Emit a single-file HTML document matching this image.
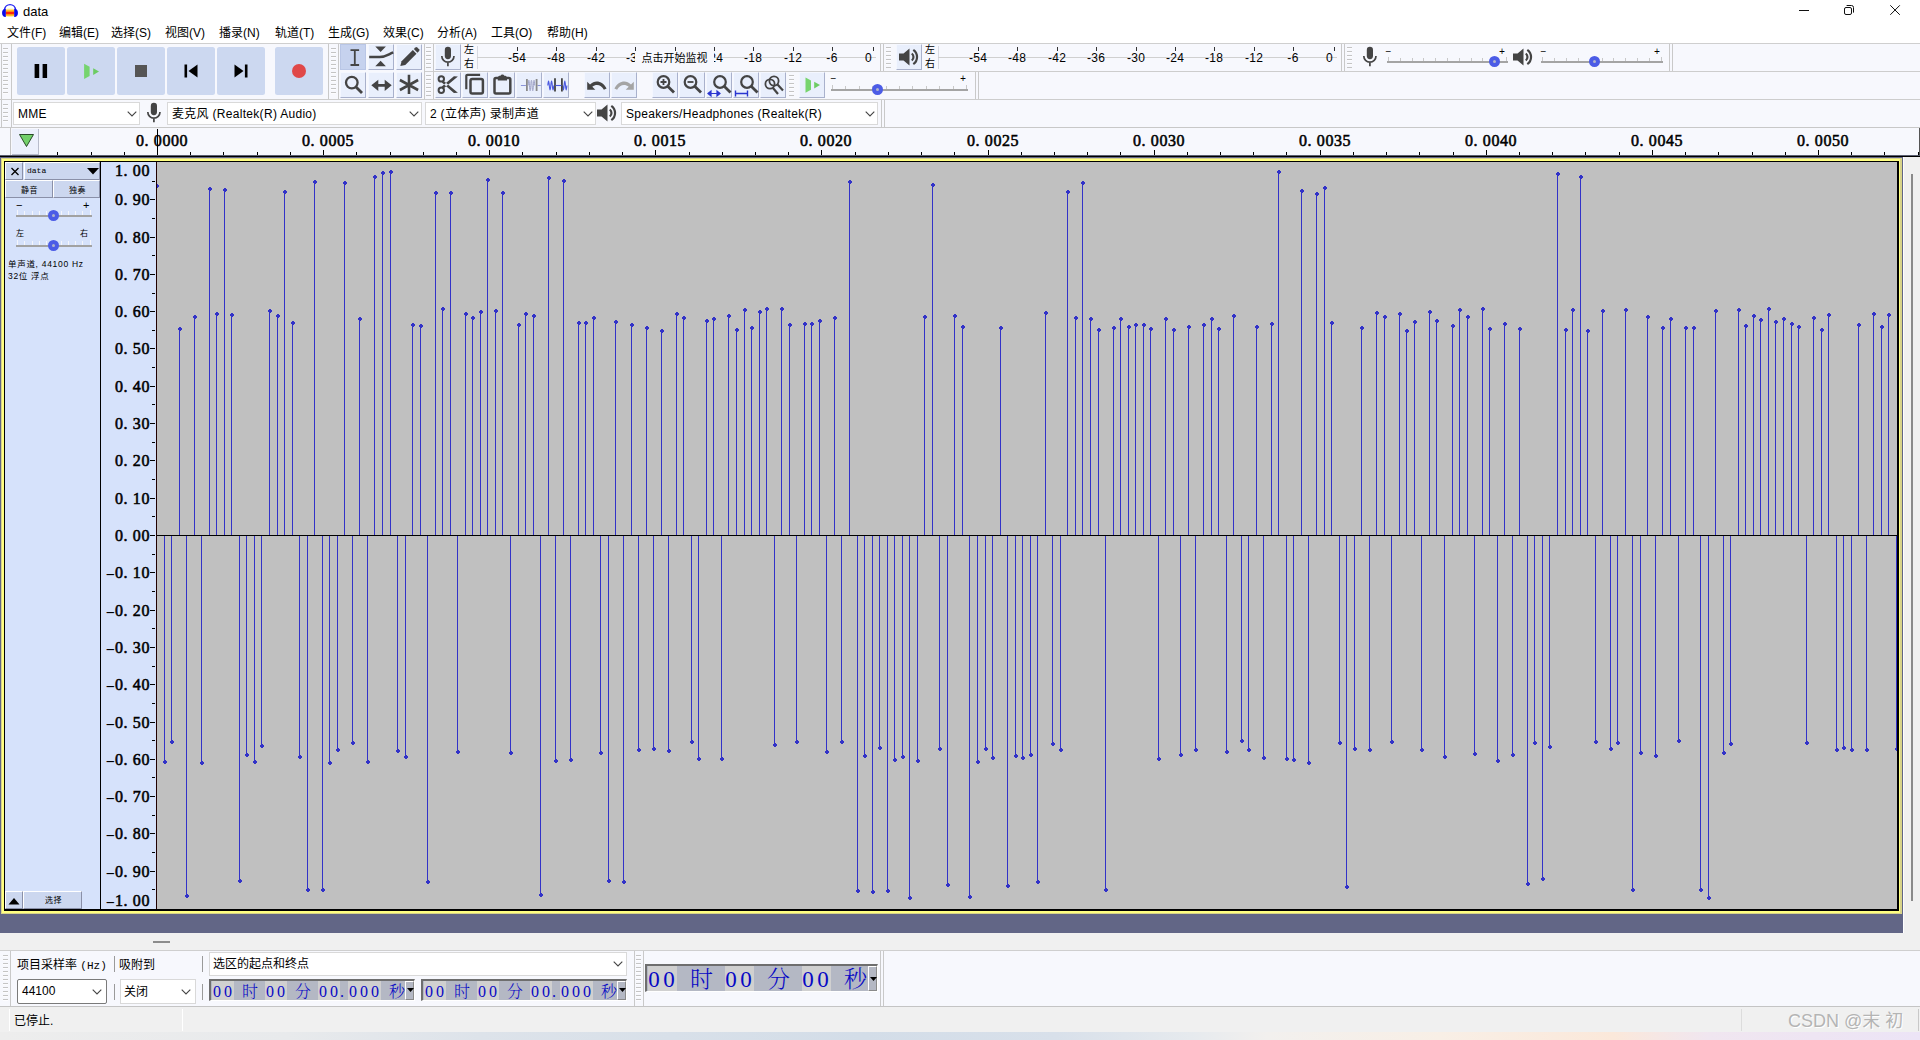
<!DOCTYPE html>
<html lang="zh-CN">
<head>
<meta charset="utf-8">
<title>data</title>
<style>
*{box-sizing:border-box;margin:0;padding:0}
html,body{width:1920px;height:1040px;overflow:hidden;background:#fff}
body{font-family:"Liberation Sans","Noto Sans CJK SC",sans-serif;font-size:12px;color:#000;position:relative}
.abs,#app *{position:absolute}
#app{position:absolute;left:0;top:0;width:1920px;height:1040px;overflow:hidden;background:#f0f0f0}
i{display:block;font-style:normal}
svg{display:block;overflow:visible}
/* title & menu */
#title{left:0;top:0;width:1920px;height:22px;background:#fff}
#title .t{left:23px;top:3.500px;font-size:13px;line-height:16px}
#menu{left:0;top:22px;width:1920px;height:21px;background:#fff}
#menu span{top:3px;font-size:12px;line-height:16px;white-space:nowrap}
/* toolbars */
#tb{left:0;top:43px;width:1920px;height:84px;background:#f7f8fd;border-top:1px solid #cfcfcf}
.hl{height:1px;background:#cdcdcd}
.vl{width:1px;background:#c4c4c4}
.grip{width:5px;background:repeating-linear-gradient(to bottom,#c4c4c4 0,#c4c4c4 1px,#fdfdff 1px,#fdfdff 2px,transparent 2px,transparent 4px)}
.big{width:48px;height:48px;top:47px;background:#ccd8f0;border-radius:2.500px}
.sm{width:26px;height:26px;background:#e9effc;border:1px solid;border-color:#f4f7ff #a9b1cc #a9b1cc #f4f7ff}
.sm.sel{background:#c6d2ee;border-color:#b9c6e6}
.combo{height:23px;background:#fff;border:1px solid #d9d9d9;line-height:22px;font-size:12px;padding-left:4px;white-space:nowrap}
.combo.dv{letter-spacing:0.300px}
.chev{width:8px;height:8px}
/* timeline */
#timeline{left:0;top:127px;width:1920px;height:30px;background:#f7f8fd;border-top:1px solid #c8c8c8}
.tk{width:1px;height:3px;top:152px;background:#000}
.tk.mj{height:5px;top:150px}
.tlab,.vlab{font-family:"Liberation Serif","Noto Serif CJK SC",serif;font-weight:normal;-webkit-text-stroke:0.55px #000;font-size:16px;line-height:18px;letter-spacing:0.6px;white-space:nowrap}
.tlab s,.vlab s{position:static !important;text-decoration:none;letter-spacing:5.200px}
.vlab .mn{position:static !important;display:inline-block;width:8.600px;text-align:center;transform:scale(1.800,0.850) translateY(0.500px);letter-spacing:0;-webkit-text-stroke:0;font-weight:normal}
.tlab{top:132px}
.vlab{right:1770px;text-align:right}
.vt{left:152px;width:3px;height:1px;background:#000}
.vt.mj{left:150px;width:5px}
.wave{left:157px;top:162px;overflow:hidden}
.tiny{font-size:8px;line-height:10px;white-space:nowrap;letter-spacing:0.550px;font-family:"Liberation Sans","Noto Sans CJK SC",sans-serif}
.digits{font-family:"Liberation Serif","Noto Serif CJK SC",serif;font-weight:300;color:#0808c4;white-space:nowrap}

.thumb{width:11px;height:11px;border-radius:50%;border:4.100px solid #4c5ce6;background:#b0b4cc}
.lr{font-size:10px;line-height:12px;font-family:"Liberation Sans","Noto Sans CJK SC",sans-serif}
.pm{font-size:10px;line-height:12px;font-family:"Liberation Mono",monospace}
.ml{top:51px;font-size:12px;line-height:14px;font-family:"Liberation Sans",sans-serif;letter-spacing:0.300px;white-space:nowrap}
.mon{background:#f7f8fd;font-size:11px;line-height:17px;text-align:center;white-space:nowrap;font-family:"Liberation Sans","Noto Sans CJK SC",sans-serif}
.ui{font-size:12px;line-height:16px;white-space:nowrap}
.hz{position:static !important;font-family:"Liberation Mono","Noto Serif CJK SC",monospace;font-size:11px}
.tc{background:#b4b8c4;border:solid;border-width:2px 1px 1px 2px;border-color:#6e6e6e #fff #fff #6e6e6e}
.dg{background:#d0d0d0}
.dg b{font-weight:normal;text-align:center;top:0}
.tcm{background:#b4b8c4;border:1px solid;border-color:#fff #8a8a8a #8a8a8a #fff}
.wm{font-size:18px;line-height:22px;color:#b4b4b4;text-shadow:1px 1px 0 #fff;white-space:nowrap}
</style>
</head>
<body>
<div id="app">

<!-- title bar -->
<div id="title">
  <svg style="left:0;top:0" width="22" height="22" viewBox="0 0 22 22">
    <defs><linearGradient id="ag" x1="0" y1="0" x2="0" y2="1"><stop offset="0" stop-color="#ffe880" stop-opacity="0.200"/><stop offset="0.250" stop-color="#ffc428"/><stop offset="0.420" stop-color="#ff7a10"/><stop offset="0.480" stop-color="#ff2408"/><stop offset="0.620" stop-color="#ff2408"/><stop offset="0.700" stop-color="#ff8a10"/><stop offset="0.850" stop-color="#ffcc30"/><stop offset="1" stop-color="#ffe880" stop-opacity="0.300"/></linearGradient></defs>
    <rect x="5.600" y="8.200" width="8.800" height="8.800" rx="2.500" fill="url(#ag)"/>
    <path d="M4.500 9.500a5.600 5.600 0 0 1 11.100 0" fill="none" stroke="#2222f0" stroke-width="1.400"/>
    <path d="M5.800 8.800v8.200c-5 .5-5-8.700 0-8.200z" fill="#0a0ae8"/>
    <path d="M14.200 8.800v8.200c5 .5 5-8.700 0-8.200z" fill="#0a0ae8"/>
  </svg>
  <span class="t">data</span>
  <svg style="left:1799px;top:10px" width="12" height="2"><rect width="10" height="1" fill="#111"/></svg>
  <svg style="left:1843px;top:4px" width="12" height="12" viewBox="0 0 12 12" fill="none" stroke="#111" stroke-width="1"><rect x="1.500" y="3.500" width="7" height="7" rx="1.500"/><path d="M3.600 1.500H8.500a2 2 0 0 1 2 2V8.600"/></svg>
  <svg style="left:1889px;top:4px" width="12" height="12" viewBox="0 0 12 12" stroke="#111" stroke-width="1"><path d="M1.300 1.300l9.500 9.500M10.800 1.300l-9.500 9.500"/></svg>
</div>

<!-- menu bar -->
<div id="menu">
  <span style="left:7px">文件(F)</span>
  <span style="left:59px">编辑(E)</span>
  <span style="left:111px">选择(S)</span>
  <span style="left:165px">视图(V)</span>
  <span style="left:219px">播录(N)</span>
  <span style="left:275px">轨道(T)</span>
  <span style="left:328px">生成(G)</span>
  <span style="left:383px">效果(C)</span>
  <span style="left:437px">分析(A)</span>
  <span style="left:491px">工具(O)</span>
  <span style="left:547px">帮助(H)</span>
</div>

<!-- toolbars background -->
<div id="tb"></div>
<i class="hl" style="left:0px;top:99px;width:1920px;background:#cdcdcd"></i><i class="hl" style="left:424px;top:71px;width:1496px;background:#cdcdcd"></i><i class="hl" style="left:0px;top:127px;width:1920px;background:#c8c8c8"></i><i class="vl" style="left:1px;top:44px;height:55px;background:#c9c9c9"></i><i class="vl" style="left:11px;top:44px;height:55px;background:#c9c9c9"></i><i class="grip" style="left:3px;top:48px;height:46px"></i><div class="big" style="left:17px"><svg width="48" height="48"><rect x="17.600" y="17" width="4.600" height="14" fill="#000"/><rect x="25.600" y="17" width="4.500" height="14" fill="#000"/></svg></div><div class="big" style="left:67px"><svg width="48" height="48"><path d="M17.100 16.800l5.500 2.900v9.400l-5.500 2.900z" fill="#76d46e"/><path d="M26.200 21.200l5.800 3.300-5.800 3.400z" fill="#6ccc62"/></svg></div><div class="big" style="left:117px"><svg width="48" height="48"><rect x="18" y="18" width="12" height="12" fill="#555"/></svg></div><div class="big" style="left:167px"><svg width="48" height="48"><rect x="17.500" y="17.500" width="2.600" height="13" fill="#000"/><path d="M30.500 17.500v13l-9-6.500z" fill="#000"/></svg></div><div class="big" style="left:217px"><svg width="48" height="48"><rect x="27.900" y="17.500" width="2.600" height="13" fill="#000"/><path d="M17.500 17.500v13l9-6.500z" fill="#000"/></svg></div><div class="big" style="left:275px"><svg width="48" height="48"><circle cx="24" cy="24" r="7" fill="#e04848"/></svg></div><i class="vl" style="left:328px;top:44px;height:55px;background:#c9c9c9"></i><i class="vl" style="left:338px;top:44px;height:55px;background:#c9c9c9"></i><i class="grip" style="left:331px;top:48px;height:46px"></i><div class="sm sel" style="left:340px;top:44px;width:26px"><svg width="26" height="26" viewBox="0 0 26 26" style="left:-1px;top:-1px;"><path d="M10.500 6.200h8.600M10.500 21h8.600M14.800 6.200v14.800" stroke="#444" stroke-width="1.800" fill="none"/></svg></div><div class="sm" style="left:368px;top:44px;width:26px"><svg width="26" height="26" viewBox="0 0 26 26" style="left:-1px;top:-1px;"><path d="M7.300 2.600h10.600l-5.300 5.400zM7.300 22.200h10.600l-5.300-5.400z" fill="#444"/><path d="M1.200 13h10.500c5.500 0 8-2.300 13.500-4.600" stroke="#444" stroke-width="2.600" fill="none"/></svg></div><div class="sm" style="left:396px;top:44px;width:26px"><svg width="26" height="26" viewBox="0 0 26 26" style="left:-1px;top:-1px;"><path d="M4.300 22l1.300-4.800L16.800 6l3.700 3.700L9.300 20.900z" fill="#444"/><path d="M17.800 5l1.600-1.600a1.300 1.300 0 0 1 1.800 0l1.900 1.900a1.300 1.300 0 0 1 0 1.800L21.500 8.700z" fill="#444"/></svg></div><div class="sm" style="left:340px;top:72px;width:26px"><svg width="26" height="26" viewBox="0 0 26 26" style="left:-1px;top:-1px;"><circle cx="11.800" cy="10.600" r="5.800" fill="none" stroke="#444" stroke-width="2.300"/><path d="M16 15l6 6" stroke="#444" stroke-width="2.800"/></svg></div><div class="sm" style="left:368px;top:72px;width:26px"><svg width="26" height="26" viewBox="0 0 26 26" style="left:-1px;top:-1px;"><path d="M3.300 13.300l7-5.600v4.200h6.400V7.700l7 5.600-7 5.600v-4.200h-6.400v4.200z" fill="#444"/></svg></div><div class="sm" style="left:396px;top:72px;width:26px"><svg width="26" height="26" viewBox="0 0 26 26" style="left:-1px;top:-1px;"><path d="M13 2.800v19.200M3.900 8l18.200 10M22.100 8L3.900 18" stroke="#444" stroke-width="2.600" fill="none"/></svg></div><i class="vl" style="left:424px;top:44px;height:55px;background:#c9c9c9"></i><i class="vl" style="left:433px;top:44px;height:55px;background:#c9c9c9"></i><i class="grip" style="left:426px;top:47px;height:21px"></i><i class="grip" style="left:426px;top:75px;height:21px"></i><div class="sm" style="left:435px;top:44px;width:26px"><svg width="26" height="26" viewBox="0 0 26 26" style="left:-1px;top:-1px;"><rect x="9.800" y="2.800" width="6.200" height="12.400" rx="3.100" fill="#444"/><path d="M6.800 12a6.100 6.100 0 0 0 12.200 0M12.900 18.200v4" fill="none" stroke="#444" stroke-width="1.700"/></svg></div><span class="lr" style="left:464px;top:44px">左</span><span class="lr" style="left:464px;top:58px">右</span><i style="left:477px;top:46px;width:1px;height:23px;background:#d8dae2"></i><i style="left:477px;top:57px;width:399px;height:1px;background:#d0d0d0"></i><span class="ml" style="left:502px;width:30px;text-align:center">-54</span><i style="left:517px;top:47px;width:1px;height:4px;background:#333"></i><span class="ml" style="left:541px;width:30px;text-align:center">-48</span><i style="left:556px;top:47px;width:1px;height:4px;background:#333"></i><span class="ml" style="left:581px;width:30px;text-align:center">-42</span><i style="left:596px;top:47px;width:1px;height:4px;background:#333"></i><span class="ml" style="left:620px;width:30px;text-align:center">-36</span><i style="left:635px;top:47px;width:1px;height:4px;background:#333"></i><span class="ml" style="left:660px;width:30px;text-align:center">-30</span><i style="left:675px;top:47px;width:1px;height:4px;background:#333"></i><span class="ml" style="left:699px;width:30px;text-align:center">-24</span><i style="left:714px;top:47px;width:1px;height:4px;background:#333"></i><span class="ml" style="left:738px;width:30px;text-align:center">-18</span><i style="left:753px;top:47px;width:1px;height:4px;background:#333"></i><span class="ml" style="left:778px;width:30px;text-align:center">-12</span><i style="left:793px;top:47px;width:1px;height:4px;background:#333"></i><span class="ml" style="left:817px;width:30px;text-align:center">-6</span><i style="left:832px;top:47px;width:1px;height:4px;background:#333"></i><span class="ml" style="left:856px;width:16px;text-align:right">0</span><i style="left:873px;top:47px;width:1px;height:4px;background:#333"></i><span class="mon" style="left:635px;top:51px;width:79px;height:15px;line-height:15px">点击开始监视</span><i class="vl" style="left:880px;top:44px;height:27px;background:#c9c9c9"></i><i class="vl" style="left:883px;top:44px;height:27px;background:#c9c9c9"></i><i class="grip" style="left:886px;top:47px;height:21px"></i><div class="sm" style="left:896px;top:44px;width:26px"><svg width="26" height="26" viewBox="0 0 26 26" style="left:-1px;top:-1px;"><path d="M3 9.500h4.500l6-5v17l-6-5H3z" fill="#444"/><path d="M15.800 9.500a4.500 4.500 0 0 1 0 7M17.300 5.800a8.800 8.800 0 0 1 0 14.400" fill="none" stroke="#444" stroke-width="2.200"/></svg></div><span class="lr" style="left:925px;top:44px">左</span><span class="lr" style="left:925px;top:58px">右</span><i style="left:938px;top:46px;width:1px;height:23px;background:#d8dae2"></i><i style="left:938px;top:57px;width:399px;height:1px;background:#d0d0d0"></i><span class="ml" style="left:963px;width:30px;text-align:center">-54</span><i style="left:978px;top:47px;width:1px;height:4px;background:#333"></i><span class="ml" style="left:1002px;width:30px;text-align:center">-48</span><i style="left:1017px;top:47px;width:1px;height:4px;background:#333"></i><span class="ml" style="left:1042px;width:30px;text-align:center">-42</span><i style="left:1057px;top:47px;width:1px;height:4px;background:#333"></i><span class="ml" style="left:1081px;width:30px;text-align:center">-36</span><i style="left:1096px;top:47px;width:1px;height:4px;background:#333"></i><span class="ml" style="left:1121px;width:30px;text-align:center">-30</span><i style="left:1136px;top:47px;width:1px;height:4px;background:#333"></i><span class="ml" style="left:1160px;width:30px;text-align:center">-24</span><i style="left:1175px;top:47px;width:1px;height:4px;background:#333"></i><span class="ml" style="left:1199px;width:30px;text-align:center">-18</span><i style="left:1214px;top:47px;width:1px;height:4px;background:#333"></i><span class="ml" style="left:1239px;width:30px;text-align:center">-12</span><i style="left:1254px;top:47px;width:1px;height:4px;background:#333"></i><span class="ml" style="left:1278px;width:30px;text-align:center">-6</span><i style="left:1293px;top:47px;width:1px;height:4px;background:#333"></i><span class="ml" style="left:1317px;width:16px;text-align:right">0</span><i style="left:1334px;top:47px;width:1px;height:4px;background:#333"></i><i class="vl" style="left:1341px;top:44px;height:27px;background:#c9c9c9"></i><i class="vl" style="left:1344px;top:44px;height:27px;background:#c9c9c9"></i><i class="grip" style="left:1347px;top:47px;height:21px"></i><svg style="left:1357px;top:44px" width="26" height="26" viewBox="0 0 26 26"><rect x="9.800" y="2.800" width="6.200" height="12.400" rx="3.100" fill="#444"/><path d="M6.800 12a6.100 6.100 0 0 0 12.200 0M12.900 18.200v4" fill="none" stroke="#444" stroke-width="1.700"/></svg><i style="left:1387px;top:61px;width:121px;height:2px;background:#a4a4a4"></i><i style="left:1388px;top:57px;width:1px;height:4px;background:#c8c8c8"></i><i style="left:1400px;top:58px;width:1px;height:3px;background:#c8c8c8"></i><i style="left:1412px;top:58px;width:1px;height:3px;background:#c8c8c8"></i><i style="left:1423px;top:58px;width:1px;height:3px;background:#c8c8c8"></i><i style="left:1435px;top:58px;width:1px;height:3px;background:#c8c8c8"></i><i style="left:1447px;top:58px;width:1px;height:3px;background:#c8c8c8"></i><i style="left:1459px;top:58px;width:1px;height:3px;background:#c8c8c8"></i><i style="left:1471px;top:58px;width:1px;height:3px;background:#c8c8c8"></i><i style="left:1482px;top:58px;width:1px;height:3px;background:#c8c8c8"></i><i style="left:1494px;top:58px;width:1px;height:3px;background:#c8c8c8"></i><i style="left:1506px;top:57px;width:1px;height:4px;background:#c8c8c8"></i><i class="thumb" style="left:1489px;top:56px"></i><span class="pm" style="left:1385px;top:47px">−</span><span class="pm" style="left:1499px;top:47px">+</span><svg style="left:1510px;top:44px" width="26" height="26" viewBox="0 0 26 26"><path d="M3 9.500h4.500l6-5v17l-6-5H3z" fill="#444"/><path d="M15.800 9.500a4.500 4.500 0 0 1 0 7M17.300 5.800a8.800 8.800 0 0 1 0 14.400" fill="none" stroke="#444" stroke-width="2.200"/></svg><i style="left:1541px;top:61px;width:122px;height:2px;background:#a4a4a4"></i><i style="left:1542px;top:57px;width:1px;height:4px;background:#c8c8c8"></i><i style="left:1554px;top:58px;width:1px;height:3px;background:#c8c8c8"></i><i style="left:1566px;top:58px;width:1px;height:3px;background:#c8c8c8"></i><i style="left:1578px;top:58px;width:1px;height:3px;background:#c8c8c8"></i><i style="left:1590px;top:58px;width:1px;height:3px;background:#c8c8c8"></i><i style="left:1602px;top:58px;width:1px;height:3px;background:#c8c8c8"></i><i style="left:1613px;top:58px;width:1px;height:3px;background:#c8c8c8"></i><i style="left:1625px;top:58px;width:1px;height:3px;background:#c8c8c8"></i><i style="left:1637px;top:58px;width:1px;height:3px;background:#c8c8c8"></i><i style="left:1649px;top:58px;width:1px;height:3px;background:#c8c8c8"></i><i style="left:1661px;top:57px;width:1px;height:4px;background:#c8c8c8"></i><i class="thumb" style="left:1589px;top:56px"></i><span class="pm" style="left:1540px;top:47px">−</span><span class="pm" style="left:1654px;top:47px">+</span><i class="vl" style="left:1669px;top:44px;height:27px;background:#c9c9c9"></i><i class="vl" style="left:1672px;top:44px;height:27px;background:#c9c9c9"></i><div class="sm" style="left:435px;top:72px;width:26px"><svg width="26" height="26" viewBox="0 0 26 26" style="left:-1px;top:-1px;"><circle cx="6.300" cy="6.900" r="2.700" fill="none" stroke="#444" stroke-width="2"/><circle cx="6.300" cy="18.300" r="2.700" fill="none" stroke="#444" stroke-width="2"/><path d="M8.200 8.500l14.700 12.300-4 .2L6.800 10.600zM8.200 16.700L22.900 4.400l-4-.2L6.800 14.600z" fill="#444"/></svg></div><div class="sm" style="left:462px;top:72px;width:26px"><svg width="26" height="26" viewBox="0 0 26 26" style="left:-1px;top:-1px;"><path d="M4.300 17.200V4a1.200 1.200 0 0 1 1.200-1.200h12.600" fill="none" stroke="#444" stroke-width="2.200"/><rect x="8.500" y="7" width="12.400" height="14.600" rx="1.800" fill="none" stroke="#444" stroke-width="2.500"/></svg></div><div class="sm" style="left:489px;top:72px;width:26px"><svg width="26" height="26" viewBox="0 0 26 26" style="left:-1px;top:-1px;"><rect x="5.500" y="6" width="15.800" height="15.600" rx="1.500" fill="none" stroke="#444" stroke-width="2.500"/><path d="M8.800 8.600V5l1.500-1.200h1.200a2 2 0 0 1 3.800 0h1.200L18 5v3.600z" fill="#444"/></svg></div><div class="sm" style="left:516px;top:72px;width:26px"><svg width="26" height="26" viewBox="0 0 26 26" style="left:-1px;top:-1px;"><path d="M4.900 13.500h5M21.500 13.500h3.200" stroke="#8a93d8" stroke-width="1.100"/><path d="M10.900 6.900v12M20.600 6.900v12" stroke="#8a8a8a" stroke-width="1.800"/><path d="M12.200 13.500c.4-7 .9-7 1.300 0s.9 7 1.300 0 .9-7 1.300 0 .9 7 1.300 0 .9-7 1.300 0" stroke="#a0a4c8" stroke-width="1" fill="none"/></svg></div><div class="sm" style="left:543px;top:72px;width:26px"><svg width="26" height="26" viewBox="0 0 26 26" style="left:-1px;top:-1px;"><path d="M4.800 13.500c.5-6 1-6 1.500 0s1 6 1.500 0 1-6 1.500 0 1 6 1.500 0M19.700 13.500c.5 6 .9 6 1.400 0s.9-6 1.400 0 .9 6 1.400 0" stroke="#4a58e0" stroke-width="1.100" fill="none"/><path d="M12 6.300v13.200M18.900 6.300v13.200" stroke="#444" stroke-width="1.800"/><path d="M12.500 13.500h6" stroke="#4a58e0" stroke-width="1.100"/></svg></div><div class="sm" style="left:584px;top:72px;width:26px"><svg width="26" height="26" viewBox="0 0 26 26" style="left:-1px;top:-1px;"><path d="M3.200 9.700v8.100h8.100l-3-3c4-3 9-2 11.600 3l2.700-1.300C19 9.500 11.500 7 6 12.500z" fill="#444"/></svg></div><div class="sm" style="left:611px;top:72px;width:26px"><svg width="26" height="26" viewBox="0 0 26 26" style="left:-1px;top:-1px;"><path d="M22.800 9.700v8.100h-8.100l3-3c-4-3-9-2-11.600 3L3.400 16.500C7 9.500 14.500 7 20 12.500z" fill="#a4a4a4"/></svg></div><div class="sm" style="left:652px;top:72px;width:26px"><svg width="26" height="26" viewBox="0 0 26 26" style="left:-1px;top:-1px;"><g transform="translate(0 0)"><circle cx="11.500" cy="10" r="5.800" fill="none" stroke="#444" stroke-width="2.200"/><path d="M15.700 14.200l6.300 6.300" stroke="#444" stroke-width="2.800"/></g><path d="M8.500 10h6M11.500 7v6" stroke="#444" stroke-width="1.800"/></svg></div><div class="sm" style="left:679px;top:72px;width:26px"><svg width="26" height="26" viewBox="0 0 26 26" style="left:-1px;top:-1px;"><g transform="translate(0 0)"><circle cx="11.500" cy="10" r="5.800" fill="none" stroke="#444" stroke-width="2.200"/><path d="M15.700 14.200l6.300 6.300" stroke="#444" stroke-width="2.800"/></g><path d="M8.500 10h6" stroke="#444" stroke-width="1.800"/></svg></div><div class="sm" style="left:706px;top:72px;width:26px"><svg width="26" height="26" viewBox="0 0 26 26" style="left:-1px;top:-1px;"><g transform="translate(2.5 0)"><circle cx="11.500" cy="10" r="5.800" fill="none" stroke="#444" stroke-width="2.200"/><path d="M15.700 14.200l6.300 6.300" stroke="#444" stroke-width="2.800"/></g><path d="M2 21.500h12M2 21.500l3-2.500v5zM14 21.500l-3-2.500v5z" stroke="#2a35d0" stroke-width="1.200" fill="#2a35d0"/></svg></div><div class="sm" style="left:733px;top:72px;width:26px"><svg width="26" height="26" viewBox="0 0 26 26" style="left:-1px;top:-1px;"><g transform="translate(2.5 0)"><circle cx="11.500" cy="10" r="5.800" fill="none" stroke="#444" stroke-width="2.200"/><path d="M15.700 14.200l6.300 6.300" stroke="#444" stroke-width="2.800"/></g><path d="M2.500 21.500h12M2.500 18.500v6M14.500 18.500v6" stroke="#2a35d0" stroke-width="1.400" fill="none"/></svg></div><div class="sm" style="left:760px;top:72px;width:26px"><svg width="26" height="26" viewBox="0 0 26 26" style="left:-1px;top:-1px;"><circle cx="10" cy="12" r="4.600" fill="none" stroke="#444" stroke-width="1.800"/><circle cx="14" cy="9" r="4.600" fill="none" stroke="#444" stroke-width="1.800"/><path d="M17.500 12.500l5.500 6M13 16l5 6" stroke="#444" stroke-width="2.200"/></svg></div><i class="grip" style="left:789px;top:75px;height:21px"></i><div class="sm" style="left:799px;top:72px;width:26px"><svg width="26" height="26" viewBox="0 0 26 26" style="left:-1px;top:-1px;"><path d="M6.500 5.500l5.500 2.900v9.400l-5.500 2.900z" fill="#76d46e"/><path d="M15.200 9.800l5.800 3.300-5.800 3.400z" fill="#6ccc62"/></svg></div><i style="left:831px;top:89px;width:137px;height:2px;background:#a4a4a4"></i><i style="left:832px;top:85px;width:1px;height:4px;background:#c8c8c8"></i><i style="left:845px;top:86px;width:1px;height:3px;background:#c8c8c8"></i><i style="left:859px;top:86px;width:1px;height:3px;background:#c8c8c8"></i><i style="left:872px;top:86px;width:1px;height:3px;background:#c8c8c8"></i><i style="left:886px;top:86px;width:1px;height:3px;background:#c8c8c8"></i><i style="left:899px;top:86px;width:1px;height:3px;background:#c8c8c8"></i><i style="left:912px;top:86px;width:1px;height:3px;background:#c8c8c8"></i><i style="left:926px;top:86px;width:1px;height:3px;background:#c8c8c8"></i><i style="left:939px;top:86px;width:1px;height:3px;background:#c8c8c8"></i><i style="left:953px;top:86px;width:1px;height:3px;background:#c8c8c8"></i><i style="left:966px;top:85px;width:1px;height:4px;background:#c8c8c8"></i><i class="thumb" style="left:872px;top:84px"></i><span class="pm" style="left:830px;top:74px">−</span><span class="pm" style="left:960px;top:74px">+</span><i class="vl" style="left:975px;top:72px;height:27px;background:#c9c9c9"></i><i class="vl" style="left:978px;top:72px;height:27px;background:#c9c9c9"></i><i class="vl" style="left:1px;top:100px;height:27px;background:#c9c9c9"></i><i class="vl" style="left:11px;top:100px;height:27px;background:#c9c9c9"></i><i class="grip" style="left:3px;top:104px;height:20px"></i><div class="combo dv" style="left:13px;top:102px;width:127px">MME<svg style="left:113px;top:8px" width="10" height="6" viewBox="0 0 10 6"><path d="M0.700 0.700L5 5l4.300-4.300" fill="none" stroke="#444" stroke-width="1.100"/></svg></div><svg style="left:141px;top:100px" width="26" height="26" viewBox="0 0 26 26"><rect x="9.800" y="2.800" width="6.200" height="12.400" rx="3.100" fill="#444"/><path d="M6.800 12a6.100 6.100 0 0 0 12.200 0M12.900 18.200v4" fill="none" stroke="#444" stroke-width="1.700"/></svg><div class="combo dv" style="left:167px;top:102px;width:255px">麦克风 (Realtek(R) Audio)<svg style="left:241px;top:8px" width="10" height="6" viewBox="0 0 10 6"><path d="M0.700 0.700L5 5l4.300-4.300" fill="none" stroke="#444" stroke-width="1.100"/></svg></div><div class="combo dv" style="left:425px;top:102px;width:171px">2 (立体声) 录制声道<svg style="left:157px;top:8px" width="10" height="6" viewBox="0 0 10 6"><path d="M0.700 0.700L5 5l4.300-4.300" fill="none" stroke="#444" stroke-width="1.100"/></svg></div><svg style="left:594px;top:100px" width="26" height="26" viewBox="0 0 26 26"><path d="M3 9.500h4.500l6-5v17l-6-5H3z" fill="#444"/><path d="M15.800 9.500a4.500 4.500 0 0 1 0 7M17.300 5.800a8.800 8.800 0 0 1 0 14.400" fill="none" stroke="#444" stroke-width="2.200"/></svg><div class="combo dv" style="left:621px;top:102px;width:257px">Speakers/Headphones (Realtek(R)<svg style="left:243px;top:8px" width="10" height="6" viewBox="0 0 10 6"><path d="M0.700 0.700L5 5l4.300-4.300" fill="none" stroke="#444" stroke-width="1.100"/></svg></div><i class="vl" style="left:881px;top:100px;height:27px;background:#c9c9c9"></i><i class="vl" style="left:884px;top:100px;height:27px;background:#c9c9c9"></i>

<!-- timeline -->
<div id="timeline"></div>
<i class="tk mj" style="left:157px"></i><span class="tlab" style="left:136px">0<s>.</s>0000</span><i class="tk" style="left:190px"></i><i class="tk" style="left:223px"></i><i class="tk" style="left:257px"></i><i class="tk" style="left:290px"></i><i class="tk mj" style="left:323px"></i><span class="tlab" style="left:302px">0<s>.</s>0005</span><i class="tk" style="left:356px"></i><i class="tk" style="left:390px"></i><i class="tk" style="left:423px"></i><i class="tk" style="left:456px"></i><i class="tk mj" style="left:489px"></i><span class="tlab" style="left:468px">0<s>.</s>0010</span><i class="tk" style="left:522px"></i><i class="tk" style="left:556px"></i><i class="tk" style="left:589px"></i><i class="tk" style="left:622px"></i><i class="tk mj" style="left:655px"></i><span class="tlab" style="left:634px">0<s>.</s>0015</span><i class="tk" style="left:689px"></i><i class="tk" style="left:722px"></i><i class="tk" style="left:755px"></i><i class="tk" style="left:788px"></i><i class="tk mj" style="left:821px"></i><span class="tlab" style="left:800px">0<s>.</s>0020</span><i class="tk" style="left:855px"></i><i class="tk" style="left:888px"></i><i class="tk" style="left:921px"></i><i class="tk" style="left:954px"></i><i class="tk mj" style="left:988px"></i><span class="tlab" style="left:967px">0<s>.</s>0025</span><i class="tk" style="left:1021px"></i><i class="tk" style="left:1054px"></i><i class="tk" style="left:1087px"></i><i class="tk" style="left:1120px"></i><i class="tk mj" style="left:1154px"></i><span class="tlab" style="left:1133px">0<s>.</s>0030</span><i class="tk" style="left:1187px"></i><i class="tk" style="left:1220px"></i><i class="tk" style="left:1253px"></i><i class="tk" style="left:1286px"></i><i class="tk mj" style="left:1320px"></i><span class="tlab" style="left:1299px">0<s>.</s>0035</span><i class="tk" style="left:1353px"></i><i class="tk" style="left:1386px"></i><i class="tk" style="left:1419px"></i><i class="tk" style="left:1453px"></i><i class="tk mj" style="left:1486px"></i><span class="tlab" style="left:1465px">0<s>.</s>0040</span><i class="tk" style="left:1519px"></i><i class="tk" style="left:1552px"></i><i class="tk" style="left:1585px"></i><i class="tk" style="left:1619px"></i><i class="tk mj" style="left:1652px"></i><span class="tlab" style="left:1631px">0<s>.</s>0045</span><i class="tk" style="left:1685px"></i><i class="tk" style="left:1718px"></i><i class="tk" style="left:1752px"></i><i class="tk" style="left:1785px"></i><i class="tk mj" style="left:1818px"></i><span class="tlab" style="left:1797px">0<s>.</s>0050</span><i class="tk" style="left:1851px"></i><i class="tk" style="left:1884px"></i><i class="tk" style="left:1918px"></i><i class="tk" style="left:124px"></i><i class="tk" style="left:91px"></i><i class="tk" style="left:57px"></i>
<i style="left:0;top:155px;width:1920px;height:1px;background:#5a5e70"></i><i style="left:0;top:156px;width:1920px;height:1px;background:#000"></i>
<i style="left:157px;top:129px;width:1px;height:26px;background:#000"></i>
<i style="left:1919px;top:128px;width:1px;height:27px;background:#555"></i>
<i class="vl" style="left:10px;top:128px;height:27px"></i>
<div style="left:12px;top:129px;width:27px;height:26px;background:#ecf0fc;border-right:1px solid #b8bccb;border-bottom:1px solid #b8bccb"><svg width="26" height="26" viewBox="0 0 26 26"><path d="M7.500 5.500h14l-7 12z" fill="#72d06a" stroke="#1a3a1a" stroke-width="0.900"/></svg></div>

<!-- track area -->
<div id="trackarea" style="left:0;top:157px;width:1903px;height:776px;background:#626686"></div>
<div style="left:1px;top:158px;width:1901px;height:756px;background:#d8d48a"></div>
<div style="left:2px;top:159px;width:1898px;height:754px;background:#ffff80"></div>
<div style="left:4px;top:161px;width:1895px;height:750px;background:#000"></div>
<div id="tinfo" style="left:5px;top:162px;width:95px;height:747px;background:#d6e2fb"></div>
<div id="vruler" style="left:101px;top:162px;width:55px;height:747px;background:#d6e2fb"></div>
<div style="left:156px;top:162px;width:1px;height:747px;background:#200000"></div>
<svg class="wave" width="1740" height="747" viewBox="157 162 1740 747" shape-rendering="crispEdges"><rect x="157" y="162" width="1740" height="747" fill="#c0c0c0"/><rect x="157" y="535" width="1740" height="1" fill="#000"/><path fill="#3232c8" d="M156 186h1V535h-1zM164 536h1V762h-1zM171 536h1V742h-1zM179 329h1V535h-1zM186 536h1V896h-1zM194 317h1V535h-1zM201 536h1V763h-1zM209 189h1V535h-1zM216 314h1V535h-1zM224 190h1V535h-1zM231 315h1V535h-1zM239 536h1V881h-1zM246 536h1V755h-1zM254 536h1V762h-1zM261 536h1V746h-1zM269 311h1V535h-1zM277 316h1V535h-1zM284 192h1V535h-1zM292 323h1V535h-1zM299 536h1V757h-1zM307 536h1V890h-1zM314 182h1V535h-1zM322 536h1V890h-1zM329 536h1V763h-1zM337 536h1V750h-1zM344 183h1V535h-1zM352 536h1V743h-1zM359 319h1V535h-1zM367 536h1V762h-1zM374 177h1V535h-1zM382 173h1V535h-1zM390 172h1V535h-1zM397 536h1V751h-1zM405 536h1V757h-1zM412 325h1V535h-1zM420 326h1V535h-1zM427 536h1V882h-1zM435 193h1V535h-1zM442 309h1V535h-1zM450 193h1V535h-1zM457 536h1V752h-1zM465 314h1V535h-1zM472 318h1V535h-1zM480 312h1V535h-1zM487 180h1V535h-1zM495 311h1V535h-1zM502 193h1V535h-1zM510 536h1V753h-1zM518 325h1V535h-1zM525 314h1V535h-1zM533 316h1V535h-1zM540 536h1V895h-1zM548 178h1V535h-1zM555 536h1V761h-1zM563 181h1V535h-1zM570 536h1V760h-1zM578 323h1V535h-1zM585 323h1V535h-1zM593 318h1V535h-1zM600 536h1V753h-1zM608 536h1V881h-1zM615 322h1V535h-1zM623 536h1V882h-1zM631 325h1V535h-1zM638 536h1V750h-1zM646 328h1V535h-1zM653 536h1V749h-1zM661 331h1V535h-1zM668 536h1V751h-1zM676 314h1V535h-1zM683 318h1V535h-1zM691 536h1V742h-1zM698 536h1V759h-1zM706 321h1V535h-1zM713 319h1V535h-1zM721 536h1V759h-1zM728 316h1V535h-1zM736 330h1V535h-1zM744 310h1V535h-1zM751 328h1V535h-1zM759 312h1V535h-1zM766 309h1V535h-1zM774 536h1V745h-1zM781 309h1V535h-1zM789 325h1V535h-1zM796 536h1V742h-1zM804 324h1V535h-1zM811 324h1V535h-1zM819 321h1V535h-1zM826 536h1V752h-1zM834 318h1V535h-1zM841 536h1V742h-1zM849 182h1V535h-1zM857 536h1V891h-1zM864 536h1V756h-1zM872 536h1V892h-1zM879 536h1V748h-1zM887 536h1V891h-1zM894 536h1V760h-1zM902 536h1V757h-1zM909 536h1V898h-1zM917 536h1V761h-1zM924 317h1V535h-1zM932 185h1V535h-1zM939 536h1V749h-1zM947 536h1V885h-1zM954 316h1V535h-1zM962 327h1V535h-1zM969 536h1V897h-1zM977 536h1V762h-1zM985 536h1V749h-1zM992 536h1V758h-1zM1000 328h1V535h-1zM1007 536h1V886h-1zM1015 536h1V756h-1zM1022 536h1V758h-1zM1030 536h1V755h-1zM1037 536h1V882h-1zM1045 313h1V535h-1zM1052 536h1V744h-1zM1060 536h1V750h-1zM1067 192h1V535h-1zM1075 318h1V535h-1zM1082 183h1V535h-1zM1090 319h1V535h-1zM1098 330h1V535h-1zM1105 536h1V890h-1zM1113 328h1V535h-1zM1120 319h1V535h-1zM1128 327h1V535h-1zM1135 325h1V535h-1zM1143 325h1V535h-1zM1150 329h1V535h-1zM1158 536h1V759h-1zM1165 319h1V535h-1zM1173 330h1V535h-1zM1180 536h1V755h-1zM1188 327h1V535h-1zM1195 536h1V750h-1zM1203 325h1V535h-1zM1211 319h1V535h-1zM1218 329h1V535h-1zM1226 536h1V752h-1zM1233 316h1V535h-1zM1241 536h1V741h-1zM1248 536h1V750h-1zM1256 327h1V535h-1zM1263 536h1V758h-1zM1271 324h1V535h-1zM1278 172h1V535h-1zM1286 536h1V759h-1zM1293 536h1V760h-1zM1301 191h1V535h-1zM1308 536h1V763h-1zM1316 194h1V535h-1zM1324 188h1V535h-1zM1331 323h1V535h-1zM1339 536h1V743h-1zM1346 536h1V887h-1zM1354 536h1V749h-1zM1361 328h1V535h-1zM1369 536h1V750h-1zM1376 313h1V535h-1zM1384 317h1V535h-1zM1391 536h1V742h-1zM1399 314h1V535h-1zM1406 331h1V535h-1zM1414 322h1V535h-1zM1421 536h1V750h-1zM1429 312h1V535h-1zM1436 321h1V535h-1zM1444 536h1V757h-1zM1452 326h1V535h-1zM1459 310h1V535h-1zM1467 317h1V535h-1zM1474 536h1V754h-1zM1482 309h1V535h-1zM1489 329h1V535h-1zM1497 536h1V761h-1zM1504 324h1V535h-1zM1512 536h1V755h-1zM1519 329h1V535h-1zM1527 536h1V884h-1zM1534 536h1V743h-1zM1542 536h1V879h-1zM1549 536h1V747h-1zM1557 174h1V535h-1zM1565 330h1V535h-1zM1572 310h1V535h-1zM1580 177h1V535h-1zM1587 331h1V535h-1zM1595 536h1V742h-1zM1602 311h1V535h-1zM1610 536h1V749h-1zM1617 536h1V743h-1zM1625 310h1V535h-1zM1632 536h1V890h-1zM1640 536h1V753h-1zM1647 317h1V535h-1zM1655 536h1V756h-1zM1662 328h1V535h-1zM1670 319h1V535h-1zM1678 536h1V741h-1zM1685 328h1V535h-1zM1693 328h1V535h-1zM1700 536h1V890h-1zM1708 536h1V898h-1zM1715 311h1V535h-1zM1723 536h1V753h-1zM1730 536h1V744h-1zM1738 310h1V535h-1zM1745 326h1V535h-1zM1753 316h1V535h-1zM1760 320h1V535h-1zM1768 309h1V535h-1zM1775 322h1V535h-1zM1783 319h1V535h-1zM1791 324h1V535h-1zM1798 327h1V535h-1zM1806 536h1V743h-1zM1813 318h1V535h-1zM1821 330h1V535h-1zM1828 315h1V535h-1zM1836 536h1V750h-1zM1843 536h1V748h-1zM1851 536h1V750h-1zM1858 325h1V535h-1zM1866 536h1V750h-1zM1873 314h1V535h-1zM1881 327h1V535h-1zM1888 315h1V535h-1zM1896 536h1V749h-1z"/><path fill="#3232c8" d="M156 184h2v1h1v2h-1v1h-2v-1h-1v-2h1zM164 760h2v1h1v2h-1v1h-2v-1h-1v-2h1zM171 740h2v1h1v2h-1v1h-2v-1h-1v-2h1zM179 327h2v1h1v2h-1v1h-2v-1h-1v-2h1zM186 894h2v1h1v2h-1v1h-2v-1h-1v-2h1zM194 315h2v1h1v2h-1v1h-2v-1h-1v-2h1zM201 761h2v1h1v2h-1v1h-2v-1h-1v-2h1zM209 187h2v1h1v2h-1v1h-2v-1h-1v-2h1zM216 312h2v1h1v2h-1v1h-2v-1h-1v-2h1zM224 188h2v1h1v2h-1v1h-2v-1h-1v-2h1zM231 313h2v1h1v2h-1v1h-2v-1h-1v-2h1zM239 879h2v1h1v2h-1v1h-2v-1h-1v-2h1zM246 753h2v1h1v2h-1v1h-2v-1h-1v-2h1zM254 760h2v1h1v2h-1v1h-2v-1h-1v-2h1zM261 744h2v1h1v2h-1v1h-2v-1h-1v-2h1zM269 309h2v1h1v2h-1v1h-2v-1h-1v-2h1zM277 314h2v1h1v2h-1v1h-2v-1h-1v-2h1zM284 190h2v1h1v2h-1v1h-2v-1h-1v-2h1zM292 321h2v1h1v2h-1v1h-2v-1h-1v-2h1zM299 755h2v1h1v2h-1v1h-2v-1h-1v-2h1zM307 888h2v1h1v2h-1v1h-2v-1h-1v-2h1zM314 180h2v1h1v2h-1v1h-2v-1h-1v-2h1zM322 888h2v1h1v2h-1v1h-2v-1h-1v-2h1zM329 761h2v1h1v2h-1v1h-2v-1h-1v-2h1zM337 748h2v1h1v2h-1v1h-2v-1h-1v-2h1zM344 181h2v1h1v2h-1v1h-2v-1h-1v-2h1zM352 741h2v1h1v2h-1v1h-2v-1h-1v-2h1zM359 317h2v1h1v2h-1v1h-2v-1h-1v-2h1zM367 760h2v1h1v2h-1v1h-2v-1h-1v-2h1zM374 175h2v1h1v2h-1v1h-2v-1h-1v-2h1zM382 171h2v1h1v2h-1v1h-2v-1h-1v-2h1zM390 170h2v1h1v2h-1v1h-2v-1h-1v-2h1zM397 749h2v1h1v2h-1v1h-2v-1h-1v-2h1zM405 755h2v1h1v2h-1v1h-2v-1h-1v-2h1zM412 323h2v1h1v2h-1v1h-2v-1h-1v-2h1zM420 324h2v1h1v2h-1v1h-2v-1h-1v-2h1zM427 880h2v1h1v2h-1v1h-2v-1h-1v-2h1zM435 191h2v1h1v2h-1v1h-2v-1h-1v-2h1zM442 307h2v1h1v2h-1v1h-2v-1h-1v-2h1zM450 191h2v1h1v2h-1v1h-2v-1h-1v-2h1zM457 750h2v1h1v2h-1v1h-2v-1h-1v-2h1zM465 312h2v1h1v2h-1v1h-2v-1h-1v-2h1zM472 316h2v1h1v2h-1v1h-2v-1h-1v-2h1zM480 310h2v1h1v2h-1v1h-2v-1h-1v-2h1zM487 178h2v1h1v2h-1v1h-2v-1h-1v-2h1zM495 309h2v1h1v2h-1v1h-2v-1h-1v-2h1zM502 191h2v1h1v2h-1v1h-2v-1h-1v-2h1zM510 751h2v1h1v2h-1v1h-2v-1h-1v-2h1zM518 323h2v1h1v2h-1v1h-2v-1h-1v-2h1zM525 312h2v1h1v2h-1v1h-2v-1h-1v-2h1zM533 314h2v1h1v2h-1v1h-2v-1h-1v-2h1zM540 893h2v1h1v2h-1v1h-2v-1h-1v-2h1zM548 176h2v1h1v2h-1v1h-2v-1h-1v-2h1zM555 759h2v1h1v2h-1v1h-2v-1h-1v-2h1zM563 179h2v1h1v2h-1v1h-2v-1h-1v-2h1zM570 758h2v1h1v2h-1v1h-2v-1h-1v-2h1zM578 321h2v1h1v2h-1v1h-2v-1h-1v-2h1zM585 321h2v1h1v2h-1v1h-2v-1h-1v-2h1zM593 316h2v1h1v2h-1v1h-2v-1h-1v-2h1zM600 751h2v1h1v2h-1v1h-2v-1h-1v-2h1zM608 879h2v1h1v2h-1v1h-2v-1h-1v-2h1zM615 320h2v1h1v2h-1v1h-2v-1h-1v-2h1zM623 880h2v1h1v2h-1v1h-2v-1h-1v-2h1zM631 323h2v1h1v2h-1v1h-2v-1h-1v-2h1zM638 748h2v1h1v2h-1v1h-2v-1h-1v-2h1zM646 326h2v1h1v2h-1v1h-2v-1h-1v-2h1zM653 747h2v1h1v2h-1v1h-2v-1h-1v-2h1zM661 329h2v1h1v2h-1v1h-2v-1h-1v-2h1zM668 749h2v1h1v2h-1v1h-2v-1h-1v-2h1zM676 312h2v1h1v2h-1v1h-2v-1h-1v-2h1zM683 316h2v1h1v2h-1v1h-2v-1h-1v-2h1zM691 740h2v1h1v2h-1v1h-2v-1h-1v-2h1zM698 757h2v1h1v2h-1v1h-2v-1h-1v-2h1zM706 319h2v1h1v2h-1v1h-2v-1h-1v-2h1zM713 317h2v1h1v2h-1v1h-2v-1h-1v-2h1zM721 757h2v1h1v2h-1v1h-2v-1h-1v-2h1zM728 314h2v1h1v2h-1v1h-2v-1h-1v-2h1zM736 328h2v1h1v2h-1v1h-2v-1h-1v-2h1zM744 308h2v1h1v2h-1v1h-2v-1h-1v-2h1zM751 326h2v1h1v2h-1v1h-2v-1h-1v-2h1zM759 310h2v1h1v2h-1v1h-2v-1h-1v-2h1zM766 307h2v1h1v2h-1v1h-2v-1h-1v-2h1zM774 743h2v1h1v2h-1v1h-2v-1h-1v-2h1zM781 307h2v1h1v2h-1v1h-2v-1h-1v-2h1zM789 323h2v1h1v2h-1v1h-2v-1h-1v-2h1zM796 740h2v1h1v2h-1v1h-2v-1h-1v-2h1zM804 322h2v1h1v2h-1v1h-2v-1h-1v-2h1zM811 322h2v1h1v2h-1v1h-2v-1h-1v-2h1zM819 319h2v1h1v2h-1v1h-2v-1h-1v-2h1zM826 750h2v1h1v2h-1v1h-2v-1h-1v-2h1zM834 316h2v1h1v2h-1v1h-2v-1h-1v-2h1zM841 740h2v1h1v2h-1v1h-2v-1h-1v-2h1zM849 180h2v1h1v2h-1v1h-2v-1h-1v-2h1zM857 889h2v1h1v2h-1v1h-2v-1h-1v-2h1zM864 754h2v1h1v2h-1v1h-2v-1h-1v-2h1zM872 890h2v1h1v2h-1v1h-2v-1h-1v-2h1zM879 746h2v1h1v2h-1v1h-2v-1h-1v-2h1zM887 889h2v1h1v2h-1v1h-2v-1h-1v-2h1zM894 758h2v1h1v2h-1v1h-2v-1h-1v-2h1zM902 755h2v1h1v2h-1v1h-2v-1h-1v-2h1zM909 896h2v1h1v2h-1v1h-2v-1h-1v-2h1zM917 759h2v1h1v2h-1v1h-2v-1h-1v-2h1zM924 315h2v1h1v2h-1v1h-2v-1h-1v-2h1zM932 183h2v1h1v2h-1v1h-2v-1h-1v-2h1zM939 747h2v1h1v2h-1v1h-2v-1h-1v-2h1zM947 883h2v1h1v2h-1v1h-2v-1h-1v-2h1zM954 314h2v1h1v2h-1v1h-2v-1h-1v-2h1zM962 325h2v1h1v2h-1v1h-2v-1h-1v-2h1zM969 895h2v1h1v2h-1v1h-2v-1h-1v-2h1zM977 760h2v1h1v2h-1v1h-2v-1h-1v-2h1zM985 747h2v1h1v2h-1v1h-2v-1h-1v-2h1zM992 756h2v1h1v2h-1v1h-2v-1h-1v-2h1zM1000 326h2v1h1v2h-1v1h-2v-1h-1v-2h1zM1007 884h2v1h1v2h-1v1h-2v-1h-1v-2h1zM1015 754h2v1h1v2h-1v1h-2v-1h-1v-2h1zM1022 756h2v1h1v2h-1v1h-2v-1h-1v-2h1zM1030 753h2v1h1v2h-1v1h-2v-1h-1v-2h1zM1037 880h2v1h1v2h-1v1h-2v-1h-1v-2h1zM1045 311h2v1h1v2h-1v1h-2v-1h-1v-2h1zM1052 742h2v1h1v2h-1v1h-2v-1h-1v-2h1zM1060 748h2v1h1v2h-1v1h-2v-1h-1v-2h1zM1067 190h2v1h1v2h-1v1h-2v-1h-1v-2h1zM1075 316h2v1h1v2h-1v1h-2v-1h-1v-2h1zM1082 181h2v1h1v2h-1v1h-2v-1h-1v-2h1zM1090 317h2v1h1v2h-1v1h-2v-1h-1v-2h1zM1098 328h2v1h1v2h-1v1h-2v-1h-1v-2h1zM1105 888h2v1h1v2h-1v1h-2v-1h-1v-2h1zM1113 326h2v1h1v2h-1v1h-2v-1h-1v-2h1zM1120 317h2v1h1v2h-1v1h-2v-1h-1v-2h1zM1128 325h2v1h1v2h-1v1h-2v-1h-1v-2h1zM1135 323h2v1h1v2h-1v1h-2v-1h-1v-2h1zM1143 323h2v1h1v2h-1v1h-2v-1h-1v-2h1zM1150 327h2v1h1v2h-1v1h-2v-1h-1v-2h1zM1158 757h2v1h1v2h-1v1h-2v-1h-1v-2h1zM1165 317h2v1h1v2h-1v1h-2v-1h-1v-2h1zM1173 328h2v1h1v2h-1v1h-2v-1h-1v-2h1zM1180 753h2v1h1v2h-1v1h-2v-1h-1v-2h1zM1188 325h2v1h1v2h-1v1h-2v-1h-1v-2h1zM1195 748h2v1h1v2h-1v1h-2v-1h-1v-2h1zM1203 323h2v1h1v2h-1v1h-2v-1h-1v-2h1zM1211 317h2v1h1v2h-1v1h-2v-1h-1v-2h1zM1218 327h2v1h1v2h-1v1h-2v-1h-1v-2h1zM1226 750h2v1h1v2h-1v1h-2v-1h-1v-2h1zM1233 314h2v1h1v2h-1v1h-2v-1h-1v-2h1zM1241 739h2v1h1v2h-1v1h-2v-1h-1v-2h1zM1248 748h2v1h1v2h-1v1h-2v-1h-1v-2h1zM1256 325h2v1h1v2h-1v1h-2v-1h-1v-2h1zM1263 756h2v1h1v2h-1v1h-2v-1h-1v-2h1zM1271 322h2v1h1v2h-1v1h-2v-1h-1v-2h1zM1278 170h2v1h1v2h-1v1h-2v-1h-1v-2h1zM1286 757h2v1h1v2h-1v1h-2v-1h-1v-2h1zM1293 758h2v1h1v2h-1v1h-2v-1h-1v-2h1zM1301 189h2v1h1v2h-1v1h-2v-1h-1v-2h1zM1308 761h2v1h1v2h-1v1h-2v-1h-1v-2h1zM1316 192h2v1h1v2h-1v1h-2v-1h-1v-2h1zM1324 186h2v1h1v2h-1v1h-2v-1h-1v-2h1zM1331 321h2v1h1v2h-1v1h-2v-1h-1v-2h1zM1339 741h2v1h1v2h-1v1h-2v-1h-1v-2h1zM1346 885h2v1h1v2h-1v1h-2v-1h-1v-2h1zM1354 747h2v1h1v2h-1v1h-2v-1h-1v-2h1zM1361 326h2v1h1v2h-1v1h-2v-1h-1v-2h1zM1369 748h2v1h1v2h-1v1h-2v-1h-1v-2h1zM1376 311h2v1h1v2h-1v1h-2v-1h-1v-2h1zM1384 315h2v1h1v2h-1v1h-2v-1h-1v-2h1zM1391 740h2v1h1v2h-1v1h-2v-1h-1v-2h1zM1399 312h2v1h1v2h-1v1h-2v-1h-1v-2h1zM1406 329h2v1h1v2h-1v1h-2v-1h-1v-2h1zM1414 320h2v1h1v2h-1v1h-2v-1h-1v-2h1zM1421 748h2v1h1v2h-1v1h-2v-1h-1v-2h1zM1429 310h2v1h1v2h-1v1h-2v-1h-1v-2h1zM1436 319h2v1h1v2h-1v1h-2v-1h-1v-2h1zM1444 755h2v1h1v2h-1v1h-2v-1h-1v-2h1zM1452 324h2v1h1v2h-1v1h-2v-1h-1v-2h1zM1459 308h2v1h1v2h-1v1h-2v-1h-1v-2h1zM1467 315h2v1h1v2h-1v1h-2v-1h-1v-2h1zM1474 752h2v1h1v2h-1v1h-2v-1h-1v-2h1zM1482 307h2v1h1v2h-1v1h-2v-1h-1v-2h1zM1489 327h2v1h1v2h-1v1h-2v-1h-1v-2h1zM1497 759h2v1h1v2h-1v1h-2v-1h-1v-2h1zM1504 322h2v1h1v2h-1v1h-2v-1h-1v-2h1zM1512 753h2v1h1v2h-1v1h-2v-1h-1v-2h1zM1519 327h2v1h1v2h-1v1h-2v-1h-1v-2h1zM1527 882h2v1h1v2h-1v1h-2v-1h-1v-2h1zM1534 741h2v1h1v2h-1v1h-2v-1h-1v-2h1zM1542 877h2v1h1v2h-1v1h-2v-1h-1v-2h1zM1549 745h2v1h1v2h-1v1h-2v-1h-1v-2h1zM1557 172h2v1h1v2h-1v1h-2v-1h-1v-2h1zM1565 328h2v1h1v2h-1v1h-2v-1h-1v-2h1zM1572 308h2v1h1v2h-1v1h-2v-1h-1v-2h1zM1580 175h2v1h1v2h-1v1h-2v-1h-1v-2h1zM1587 329h2v1h1v2h-1v1h-2v-1h-1v-2h1zM1595 740h2v1h1v2h-1v1h-2v-1h-1v-2h1zM1602 309h2v1h1v2h-1v1h-2v-1h-1v-2h1zM1610 747h2v1h1v2h-1v1h-2v-1h-1v-2h1zM1617 741h2v1h1v2h-1v1h-2v-1h-1v-2h1zM1625 308h2v1h1v2h-1v1h-2v-1h-1v-2h1zM1632 888h2v1h1v2h-1v1h-2v-1h-1v-2h1zM1640 751h2v1h1v2h-1v1h-2v-1h-1v-2h1zM1647 315h2v1h1v2h-1v1h-2v-1h-1v-2h1zM1655 754h2v1h1v2h-1v1h-2v-1h-1v-2h1zM1662 326h2v1h1v2h-1v1h-2v-1h-1v-2h1zM1670 317h2v1h1v2h-1v1h-2v-1h-1v-2h1zM1678 739h2v1h1v2h-1v1h-2v-1h-1v-2h1zM1685 326h2v1h1v2h-1v1h-2v-1h-1v-2h1zM1693 326h2v1h1v2h-1v1h-2v-1h-1v-2h1zM1700 888h2v1h1v2h-1v1h-2v-1h-1v-2h1zM1708 896h2v1h1v2h-1v1h-2v-1h-1v-2h1zM1715 309h2v1h1v2h-1v1h-2v-1h-1v-2h1zM1723 751h2v1h1v2h-1v1h-2v-1h-1v-2h1zM1730 742h2v1h1v2h-1v1h-2v-1h-1v-2h1zM1738 308h2v1h1v2h-1v1h-2v-1h-1v-2h1zM1745 324h2v1h1v2h-1v1h-2v-1h-1v-2h1zM1753 314h2v1h1v2h-1v1h-2v-1h-1v-2h1zM1760 318h2v1h1v2h-1v1h-2v-1h-1v-2h1zM1768 307h2v1h1v2h-1v1h-2v-1h-1v-2h1zM1775 320h2v1h1v2h-1v1h-2v-1h-1v-2h1zM1783 317h2v1h1v2h-1v1h-2v-1h-1v-2h1zM1791 322h2v1h1v2h-1v1h-2v-1h-1v-2h1zM1798 325h2v1h1v2h-1v1h-2v-1h-1v-2h1zM1806 741h2v1h1v2h-1v1h-2v-1h-1v-2h1zM1813 316h2v1h1v2h-1v1h-2v-1h-1v-2h1zM1821 328h2v1h1v2h-1v1h-2v-1h-1v-2h1zM1828 313h2v1h1v2h-1v1h-2v-1h-1v-2h1zM1836 748h2v1h1v2h-1v1h-2v-1h-1v-2h1zM1843 746h2v1h1v2h-1v1h-2v-1h-1v-2h1zM1851 748h2v1h1v2h-1v1h-2v-1h-1v-2h1zM1858 323h2v1h1v2h-1v1h-2v-1h-1v-2h1zM1866 748h2v1h1v2h-1v1h-2v-1h-1v-2h1zM1873 312h2v1h1v2h-1v1h-2v-1h-1v-2h1zM1881 325h2v1h1v2h-1v1h-2v-1h-1v-2h1zM1888 313h2v1h1v2h-1v1h-2v-1h-1v-2h1zM1896 747h2v1h1v2h-1v1h-2v-1h-1v-2h1z"/></svg>
<span class="vlab" style="top:892px"><b class="mn">-</b>1<s>.</s>00</span><i class="vt mj" style="top:871px"></i><span class="vlab" style="top:863px"><b class="mn">-</b>0<s>.</s>90</span><i class="vt mj" style="top:833px"></i><span class="vlab" style="top:825px"><b class="mn">-</b>0<s>.</s>80</span><i class="vt mj" style="top:796px"></i><span class="vlab" style="top:788px"><b class="mn">-</b>0<s>.</s>70</span><i class="vt mj" style="top:759px"></i><span class="vlab" style="top:751px"><b class="mn">-</b>0<s>.</s>60</span><i class="vt mj" style="top:722px"></i><span class="vlab" style="top:714px"><b class="mn">-</b>0<s>.</s>50</span><i class="vt mj" style="top:684px"></i><span class="vlab" style="top:676px"><b class="mn">-</b>0<s>.</s>40</span><i class="vt mj" style="top:647px"></i><span class="vlab" style="top:639px"><b class="mn">-</b>0<s>.</s>30</span><i class="vt mj" style="top:610px"></i><span class="vlab" style="top:602px"><b class="mn">-</b>0<s>.</s>20</span><i class="vt mj" style="top:572px"></i><span class="vlab" style="top:564px"><b class="mn">-</b>0<s>.</s>10</span><i class="vt mj" style="top:535px"></i><span class="vlab" style="top:527px">0<s>.</s>00</span><i class="vt mj" style="top:498px"></i><span class="vlab" style="top:490px">0<s>.</s>10</span><i class="vt mj" style="top:460px"></i><span class="vlab" style="top:452px">0<s>.</s>20</span><i class="vt mj" style="top:423px"></i><span class="vlab" style="top:415px">0<s>.</s>30</span><i class="vt mj" style="top:386px"></i><span class="vlab" style="top:378px">0<s>.</s>40</span><i class="vt mj" style="top:348px"></i><span class="vlab" style="top:340px">0<s>.</s>50</span><i class="vt mj" style="top:311px"></i><span class="vlab" style="top:303px">0<s>.</s>60</span><i class="vt mj" style="top:274px"></i><span class="vlab" style="top:266px">0<s>.</s>70</span><i class="vt mj" style="top:237px"></i><span class="vlab" style="top:229px">0<s>.</s>80</span><i class="vt mj" style="top:199px"></i><span class="vlab" style="top:191px">0<s>.</s>90</span><span class="vlab" style="top:162px">1<s>.</s>00</span><i class="vt" style="top:889px"></i><i class="vt" style="top:852px"></i><i class="vt" style="top:815px"></i><i class="vt" style="top:777px"></i><i class="vt" style="top:740px"></i><i class="vt" style="top:703px"></i><i class="vt" style="top:666px"></i><i class="vt" style="top:628px"></i><i class="vt" style="top:591px"></i><i class="vt" style="top:554px"></i><i class="vt" style="top:516px"></i><i class="vt" style="top:479px"></i><i class="vt" style="top:442px"></i><i class="vt" style="top:404px"></i><i class="vt" style="top:367px"></i><i class="vt" style="top:330px"></i><i class="vt" style="top:293px"></i><i class="vt" style="top:255px"></i><i class="vt" style="top:218px"></i><i class="vt" style="top:181px"></i>
<div style="left:5px;top:162px;width:18px;height:18px;background:#ccd7ef;border:1px solid;border-color:#fff #8a90a8 #8a90a8 #fff"><svg width="16" height="16" viewBox="0 0 16 16"><path d="M5.500 5l7 7M12.500 5l-7 7" stroke="#000" stroke-width="1.300"/></svg></div><div style="left:24px;top:162px;width:76px;height:18px;background:#ccd7ef;border:1px solid;border-color:#fff #8a90a8 #8a90a8 #fff"><span class="tiny" style="left:2px;top:3px;font-family:'Liberation Mono',monospace;letter-spacing:0">data</span><svg style="left:62px;top:5px" width="12" height="7"><path d="M0 0h12l-6 6.500z" fill="#000"/></svg></div><div style="left:5px;top:180px;width:48px;height:18px;background:#ccd7ef;border:1px solid;border-color:#fff #8a90a8 #8a90a8 #fff"><span class="tiny" style="left:15px;top:5px">静音</span></div><div style="left:53px;top:180px;width:47px;height:18px;background:#ccd7ef;border:1px solid;border-color:#fff #8a90a8 #8a90a8 #fff"><span class="tiny" style="left:15px;top:5px">独奏</span></div><span class="tiny" style="left:16px;top:200px;font-size:11px">−</span><span class="tiny" style="left:83px;top:200px;font-size:11px">+</span><i style="left:16px;top:215px;width:76px;height:2px;background:#a2a2a2"></i><i style="left:17px;top:210px;width:1px;height:5px;background:#f4f6fc"></i><i style="left:24px;top:211px;width:1px;height:4px;background:#f4f6fc"></i><i style="left:32px;top:211px;width:1px;height:4px;background:#f4f6fc"></i><i style="left:39px;top:211px;width:1px;height:4px;background:#f4f6fc"></i><i style="left:46px;top:211px;width:1px;height:4px;background:#f4f6fc"></i><i style="left:53px;top:211px;width:1px;height:4px;background:#f4f6fc"></i><i style="left:61px;top:211px;width:1px;height:4px;background:#f4f6fc"></i><i style="left:68px;top:211px;width:1px;height:4px;background:#f4f6fc"></i><i style="left:75px;top:211px;width:1px;height:4px;background:#f4f6fc"></i><i style="left:82px;top:211px;width:1px;height:4px;background:#f4f6fc"></i><i style="left:90px;top:210px;width:1px;height:5px;background:#f4f6fc"></i><i class="thumb" style="left:48px;top:210px"></i><span class="tiny" style="left:16px;top:229px">左</span><span class="tiny" style="left:80px;top:229px">右</span><i style="left:16px;top:245px;width:76px;height:2px;background:#a2a2a2"></i><i style="left:17px;top:240px;width:1px;height:5px;background:#f4f6fc"></i><i style="left:24px;top:241px;width:1px;height:4px;background:#f4f6fc"></i><i style="left:32px;top:241px;width:1px;height:4px;background:#f4f6fc"></i><i style="left:39px;top:241px;width:1px;height:4px;background:#f4f6fc"></i><i style="left:46px;top:241px;width:1px;height:4px;background:#f4f6fc"></i><i style="left:53px;top:241px;width:1px;height:4px;background:#f4f6fc"></i><i style="left:61px;top:241px;width:1px;height:4px;background:#f4f6fc"></i><i style="left:68px;top:241px;width:1px;height:4px;background:#f4f6fc"></i><i style="left:75px;top:241px;width:1px;height:4px;background:#f4f6fc"></i><i style="left:82px;top:241px;width:1px;height:4px;background:#f4f6fc"></i><i style="left:90px;top:240px;width:1px;height:5px;background:#f4f6fc"></i><i class="thumb" style="left:48px;top:240px"></i><span class="tiny" style="left:8px;top:259px;font-size:8.500px;letter-spacing:0.700px">单声道, 44100 Hz</span><span class="tiny" style="left:8px;top:271px;font-size:8.500px;letter-spacing:0.700px">32位 浮点</span><div style="left:5px;top:891px;width:18px;height:18px;background:#ccd7ef;border:1px solid;border-color:#fff #8a90a8 #8a90a8 #fff"><svg width="16" height="16"><path d="M2.500 12.500h11l-5.500-6.500z" fill="#000"/></svg></div><div style="left:23px;top:891px;width:59px;height:18px;background:#ccd7ef;border:1px solid;border-color:#fff #8a90a8 #8a90a8 #fff"><span class="tiny" style="left:21px;top:4px">选择</span></div>

<!-- vertical scrollbar -->
<div style="left:1903px;top:157px;width:17px;height:793px;background:#f0f0f0;border-left:1px solid #fff"></div>
<div style="left:1911px;top:174px;width:2px;height:727px;background:#8a8a8a"></div>

<!-- bottom -->
<div style="left:0;top:933px;width:1920px;height:17px;background:#f0f0f0"></div>
<div style="left:153px;top:941px;width:17px;height:2px;background:#8c8c8c"></div>
<div id="seltb" style="left:0;top:950px;width:1920px;height:56px;background:#f7f8fd;border-top:1px solid #cfcfcf"></div>
<i class="vl" style="left:10px;top:951px;height:55px;background:#c9c9c9"></i><i class="grip" style="left:3px;top:955px;height:47px"></i><span class="ui" style="left:17px;top:957px">项目采样率 <span class="hz">(Hz)</span></span><i class="vl" style="left:114px;top:956px;height:16px;background:#9a9a9a"></i><i class="vl" style="left:114px;top:984px;height:16px;background:#9a9a9a"></i><span class="ui" style="left:119px;top:957px">吸附到</span><i class="vl" style="left:202px;top:956px;height:16px;background:#9a9a9a"></i><i class="vl" style="left:202px;top:984px;height:16px;background:#9a9a9a"></i><div class="combo" style="left:209px;top:952px;width:418px;height:24px;line-height:22px;padding-left:3px">选区的起点和终点<svg style="left:403px;top:8px" width="10" height="6" viewBox="0 0 10 6"><path d="M0.700 0.700L5 5l4.300-4.300" fill="none" stroke="#444" stroke-width="1.100"/></svg></div><div class="combo" style="left:17px;top:979px;width:90px;height:25px;border-color:#7a7a7a;border-radius:2px;line-height:22px;padding-left:4px">44100<svg style="left:74px;top:9px" width="10" height="6" viewBox="0 0 10 6"><path d="M0.700 0.700L5 5l4.300-4.300" fill="none" stroke="#444" stroke-width="1.100"/></svg></div><div class="combo" style="left:120px;top:979px;width:76px;height:25px;line-height:25px;padding-left:3px">关闭<svg style="left:60px;top:9px" width="10" height="6" viewBox="0 0 10 6"><path d="M0.700 0.700L5 5l4.300-4.300" fill="none" stroke="#444" stroke-width="1.100"/></svg></div><div class="tc" style="left:209px;top:979px;width:206px;height:22px"><div class="dg digits" style="left:1px;top:0;width:22px;height:19px;font-size:16px;line-height:22px"><b style="left:-0.5px;width:11px">0</b><b style="left:10.5px;width:11px">0</b></div><span class="digits" style="left:31px;top:0;font-size:16px;line-height:22px">时</span><div class="dg digits" style="left:54px;top:0;width:22px;height:19px;font-size:16px;line-height:22px"><b style="left:-0.5px;width:11px">0</b><b style="left:10.5px;width:11px">0</b></div><span class="digits" style="left:84px;top:0;font-size:16px;line-height:22px">分</span><div class="dg digits" style="left:107px;top:0;width:22px;height:19px;font-size:16px;line-height:22px"><b style="left:-0.5px;width:11px">0</b><b style="left:10.5px;width:11px">0</b></div><span class="digits" style="left:129px;top:0;font-size:16px;line-height:22px">.</span><div class="dg digits" style="left:137px;top:0;width:33px;height:19px;font-size:16px;line-height:22px"><b style="left:-0.5px;width:11px">0</b><b style="left:10.5px;width:11px">0</b><b style="left:21.5px;width:11px">0</b></div><span class="digits" style="left:178px;top:0;font-size:16px;line-height:22px">秒</span><div class="tcm" style="left:194px;top:0;width:9px;height:19px"><svg style="left:0.5px;top:6px" width="7" height="4"><path d="M0 0h7l-3.500 4z" fill="#000"/></svg></div></div><div class="tc" style="left:421px;top:979px;width:206px;height:22px"><div class="dg digits" style="left:1px;top:0;width:22px;height:19px;font-size:16px;line-height:22px"><b style="left:-0.5px;width:11px">0</b><b style="left:10.5px;width:11px">0</b></div><span class="digits" style="left:31px;top:0;font-size:16px;line-height:22px">时</span><div class="dg digits" style="left:54px;top:0;width:22px;height:19px;font-size:16px;line-height:22px"><b style="left:-0.5px;width:11px">0</b><b style="left:10.5px;width:11px">0</b></div><span class="digits" style="left:84px;top:0;font-size:16px;line-height:22px">分</span><div class="dg digits" style="left:107px;top:0;width:22px;height:19px;font-size:16px;line-height:22px"><b style="left:-0.5px;width:11px">0</b><b style="left:10.5px;width:11px">0</b></div><span class="digits" style="left:129px;top:0;font-size:16px;line-height:22px">.</span><div class="dg digits" style="left:137px;top:0;width:33px;height:19px;font-size:16px;line-height:22px"><b style="left:-0.5px;width:11px">0</b><b style="left:10.5px;width:11px">0</b><b style="left:21.5px;width:11px">0</b></div><span class="digits" style="left:178px;top:0;font-size:16px;line-height:22px">秒</span><div class="tcm" style="left:194px;top:0;width:9px;height:19px"><svg style="left:0.5px;top:6px" width="7" height="4"><path d="M0 0h7l-3.500 4z" fill="#000"/></svg></div></div><i class="vl" style="left:634px;top:951px;height:55px;background:#c9c9c9"></i><i class="vl" style="left:643px;top:951px;height:55px;background:#c9c9c9"></i><i class="grip" style="left:636px;top:955px;height:47px"></i><div class="tc" style="left:645px;top:964px;width:233px;height:28px"><div class="dg digits" style="left:1px;top:0;width:29px;height:25px;font-size:23px;line-height:28px"><b style="left:-1.5px;width:15px">0</b><b style="left:13.5px;width:15px">0</b></div><span class="digits" style="left:43px;top:0;font-size:23px;line-height:28px">时</span><div class="dg digits" style="left:78px;top:0;width:29px;height:25px;font-size:23px;line-height:28px"><b style="left:-1.5px;width:15px">0</b><b style="left:13.5px;width:15px">0</b></div><span class="digits" style="left:120px;top:0;font-size:23px;line-height:28px">分</span><div class="dg digits" style="left:155px;top:0;width:29px;height:25px;font-size:23px;line-height:28px"><b style="left:-1.5px;width:15px">0</b><b style="left:13.5px;width:15px">0</b></div><span class="digits" style="left:197px;top:0;font-size:23px;line-height:28px">秒</span><div class="tcm" style="left:221px;top:0;width:9px;height:25px"><svg style="left:0.5px;top:10px" width="7" height="4"><path d="M0 0h7l-3.500 4z" fill="#000"/></svg></div></div><i class="vl" style="left:880px;top:951px;height:55px;background:#c9c9c9"></i><i class="vl" style="left:883px;top:951px;height:55px;background:#c9c9c9"></i>
<div id="status" style="left:0;top:1006px;width:1920px;height:26px;background:#f0f0f0"></div>
<i class="vl" style="left:9px;top:1009px;height:22px;background:#fff"></i><i class="vl" style="left:182px;top:1009px;height:22px;background:#fff"></i><i class="vl" style="left:1741px;top:1009px;height:22px;background:#dcdcdc"></i><i class="hl" style="left:0px;top:1006px;width:1920px;background:#c4c4c4"></i><i class="vl" style="left:1918px;top:1009px;height:22px;background:#c8c8c8"></i><span class="ui" style="left:14px;top:1013px">已停止.</span><span class="wm" style="left:1788px;top:1010px">CSDN @末 初</span>
<div id="desk" style="left:0;top:1032px;width:1920px;height:8px;background:linear-gradient(90deg,#ededed 0%,#e8eaec 15%,#dde3ea 25%,#d3dde8 45%,#d8e0ea 55%,#e6eaee 62%,#f2f0ee 66%,#f8efe6 75%,#fbe8da 84%,#f0e6f0 89%,#ece4f6 100%)"></div>

</div>
</body>
</html>
